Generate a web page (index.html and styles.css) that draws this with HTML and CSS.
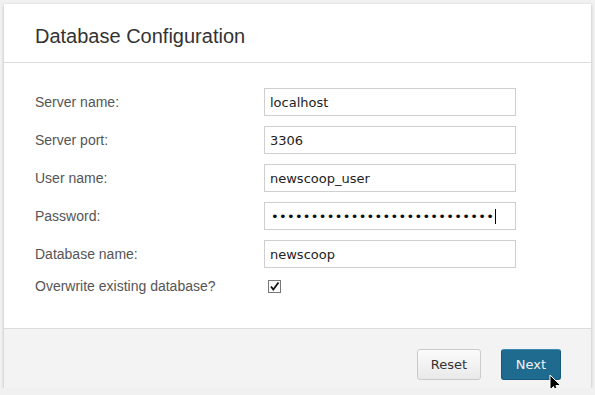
FILE: index.html
```html
<!DOCTYPE html>
<html lang="en">
<head>
    <meta charset="utf-8">
    <title>Database Configuration</title>
    <link rel="stylesheet" href="styles.css">
</head>
<body>
    <div class="panel">
        <div class="head">
            <h1>Database Configuration</h1>
        </div>

        <div class="form">
            <label class="label">Server name:</label>
            <input class="field" type="text" value="localhost">

            <label class="label">Server port:</label>
            <input class="field" type="text" value="3306">

            <label class="label">User name:</label>
            <input class="field" type="text" value="newscoop_user">

            <label class="label">Password:</label>
            <div class="field pass">••••••••••••••••••••••••••••<span class="caret"></span></div>

            <label class="label">Database name:</label>
            <input class="field" type="text" value="newscoop">

            <label class="label">Overwrite existing database?</label>
            <div class="checkrow">
                <span class="check">
                    <svg width="11" height="11" viewBox="0 0 11 11"><path d="M2 5.5 L4.3 8.5 L9.5 1.5" fill="none" stroke="#111" stroke-width="1.8"/></svg>
                </span>
            </div>
        </div>

        <div class="foot">
            <button class="btn reset">Reset</button>
            <div class="next-wrap">
                <button class="btn next">Next</button>
                <svg class="cursor" width="14" height="21" viewBox="0 0 14 21">
                    <path d="M1 1 L1 16 L4.5 12.5 L7.3 19 L9.6 18 L6.9 11.6 L11.8 11.6 Z" fill="#000" stroke="#fff" stroke-width="1" stroke-linejoin="round"/>
                </svg>
            </div>
        </div>
    </div>
</body>
</html>
```

FILE: styles.css
```css
body{
    margin: 0;
    background-color: #f1f1f1;
    font-family: "Liberation Sans", Arial, sans-serif;
}
.panel{
    margin: 4px 0 0 4px;
    width: 587px;
    height: 384px;
    background-color: #fff;
    box-shadow: 0 1px 3px rgba(0, 0, 0, 0.25);
    display: flex;
    flex-direction: column;
}
.head{
    padding: 20px 31px 14px;
    border-bottom: 1px solid #dcdcdc;
}
.head h1{
    margin: 0;
    font-size: 20px;
    line-height: 24px;
    font-weight: normal;
    color: #333;
}
.form{
    flex: 1;
    display: grid;
    grid-template-columns: 229px 252px;
    grid-template-rows: repeat(5, 28px) 16px;
    row-gap: 10px;
    align-items: center;
    align-content: start;
    padding: 25px 31px 0;
}
.label{
    font-size: 14px;
    color: #555;
}
.field{
    box-sizing: border-box;
    height: 28px;
    width: 252px;
    margin: 0;
    padding: 0 5px;
    border: 1px solid #cfcfcf;
    background: #fff;
    font-family: "DejaVu Sans", sans-serif;
    font-size: 13px;
    color: #222;
    outline: none;
}
.pass{
    display: flex;
    align-items: center;
    padding-left: 6px;
    letter-spacing: 0.3px;
    color: #111;
}
.caret{
    display: inline-block;
    width: 1px;
    height: 15px;
    margin-left: 1px;
    background: #000;
}
.checkrow{
    display: flex;
    align-items: center;
}
.check{
    box-sizing: border-box;
    width: 13px;
    height: 13px;
    margin-left: 4px;
    border: 1px solid #777;
    background: #fafafa;
    display: flex;
    align-items: center;
    justify-content: center;
}
.check svg{
    display: block;
}
.foot{
    height: 60px;
    box-sizing: border-box;
    border-top: 1px solid #dcdcdc;
    background-color: #f3f3f3;
    display: flex;
    justify-content: flex-end;
    align-items: flex-start;
    gap: 20px;
    padding: 20px 30px 0;
}
.btn{
    height: 31px;
    margin: 0;
    border-radius: 3px;
    font-family: "DejaVu Sans", sans-serif;
    font-size: 13px;
    cursor: pointer;
}
.reset{
    width: 64px;
    border: 1px solid #cacaca;
    background: linear-gradient(#fbfbfb, #e9e9e9);
    color: #333;
}
.next-wrap{
    position: relative;
}
.next{
    width: 60px;
    border: 1px solid #17597a;
    border-top-color: #3b8ab0;
    background: #1f6b90;
    color: #f2f2f2;
}
.cursor{
    position: absolute;
    left: 48px;
    top: 25px;
}
```
